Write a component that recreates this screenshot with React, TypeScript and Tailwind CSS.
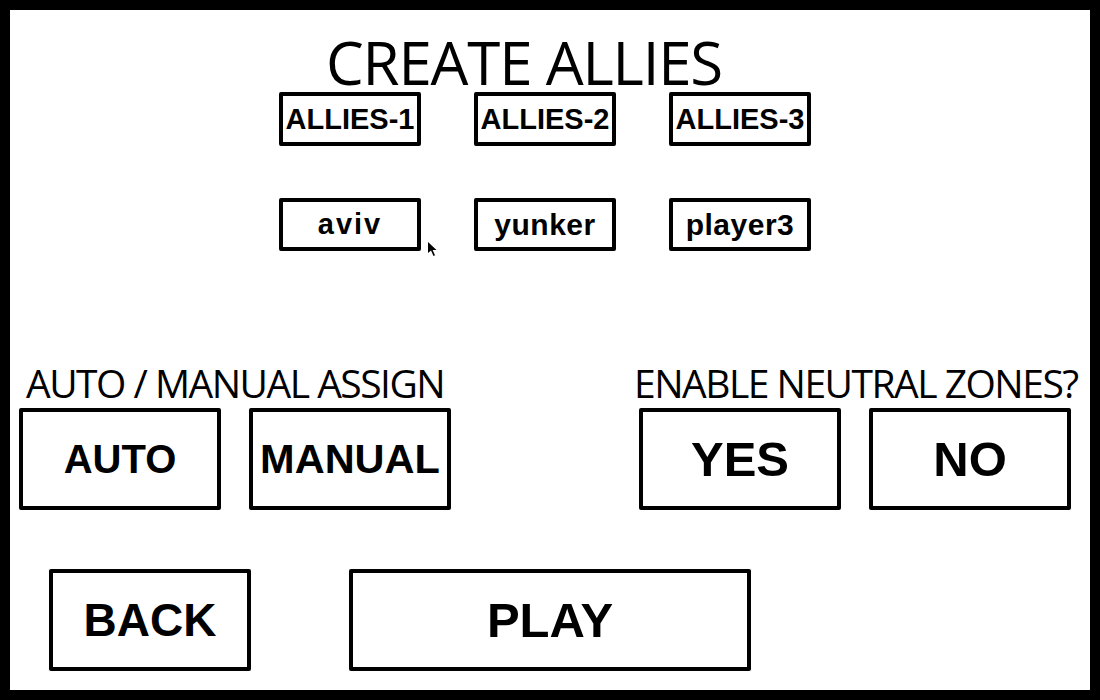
import React from "react";

const bold = { fontFamily: '"Liberation Sans", Arial, sans-serif' };
const thin = { fontFamily: '"Open Sans", "Noto Sans", sans-serif' };

function SmallBox({ children, extra = "" }: { children: React.ReactNode; extra?: string }) {
  return (
    <div
      className={`w-[142px] border-[4px] border-black rounded-[2px] flex items-center justify-center font-bold text-black leading-none ${extra}`}
      style={bold}
    >
      {children}
    </div>
  );
}

function BigBox({ children, size }: { children: React.ReactNode; size: string }) {
  return (
    <div
      className={`w-[202px] h-[102px] border-[4px] border-black rounded-[2px] flex items-center justify-center font-bold text-black leading-none ${size}`}
      style={bold}
    >
      {children}
    </div>
  );
}

export default function App() {
  return (
    <div className="w-[1100px] h-[700px] bg-black p-[10px]">
      <div className="relative w-full h-full bg-white flex flex-col">
        <div
          className="pt-[22px] pl-[316px] text-[60px] leading-none tracking-[-1.2px] text-black whitespace-nowrap"
          style={thin}
        >
          CREATE ALLIES
        </div>

        <div className="flex gap-[53px] pl-[269px]">
          <SmallBox extra="h-[54px] text-[29px]">ALLIES-1</SmallBox>
          <SmallBox extra="h-[54px] text-[29px]">ALLIES-2</SmallBox>
          <SmallBox extra="h-[54px] text-[29px]">ALLIES-3</SmallBox>
        </div>

        <div className="flex gap-[53px] pl-[269px] mt-[52px]">
          <SmallBox extra="h-[53px] text-[29px] tracking-[2px]">aviv</SmallBox>
          <SmallBox extra="h-[53px] text-[30px] tracking-[0.5px]">yunker</SmallBox>
          <SmallBox extra="h-[53px] text-[30px] tracking-[0.5px]">player3</SmallBox>
        </div>

        <div className="flex justify-between pl-[9px] pr-[19px] mt-[112px]">
          <div className="flex flex-col">
            <div
              className="pl-[7px] text-[39px] leading-none tracking-[-1.5px] text-black whitespace-nowrap"
              style={thin}
            >
              AUTO / MANUAL ASSIGN
            </div>
            <div className="flex gap-[28px] mt-[6px]">
              <BigBox size="text-[40px]">AUTO</BigBox>
              <BigBox size="text-[41.5px]">MANUAL</BigBox>
            </div>
          </div>
          <div className="flex flex-col w-[432px]">
            <div
              className="-ml-[5px] text-[39px] leading-none tracking-[-1.5px] text-black whitespace-nowrap"
              style={thin}
            >
              ENABLE NEUTRAL ZONES?
            </div>
            <div className="flex gap-[28px] mt-[6px]">
              <BigBox size="text-[49px]">YES</BigBox>
              <BigBox size="text-[49px]">NO</BigBox>
            </div>
          </div>
        </div>

        <div className="flex gap-[98px] pl-[39px] mt-[59px]">
          <BigBox size="text-[46px]">BACK</BigBox>
          <div
            className="w-[402px] h-[102px] border-[4px] border-black rounded-[2px] flex items-center justify-center font-bold text-black leading-none text-[49px]"
            style={bold}
          >
            PLAY
          </div>
        </div>

        <svg
          className="absolute left-[418px] top-[232px]"
          width="10"
          height="15"
          viewBox="0 0 10 15"
        >
          <path d="M0 0 L0 11 L3 8.5 L5.5 14 L7 13.3 L4.6 8 L8.5 8 Z" fill="black" />
        </svg>
      </div>
    </div>
  );
}
